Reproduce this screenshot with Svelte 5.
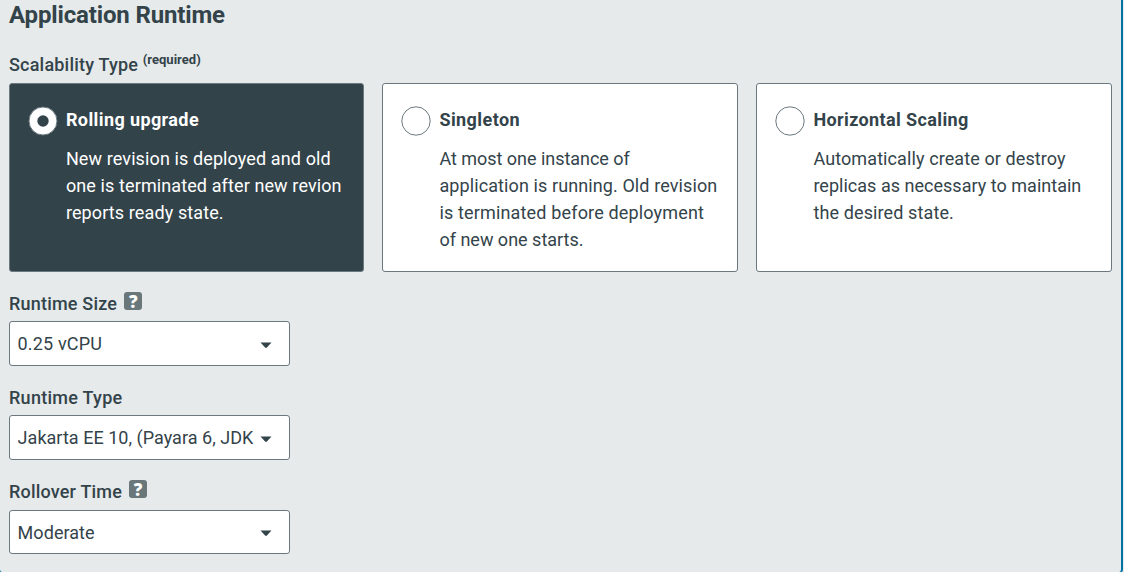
<script>
  const cards = [
    { title: 'Rolling upgrade', gap: 0.4, lines: [['New revision is deployed and old', 0.11], ['one is terminated after new revion', 0.11], ['reports ready state.', 0.11]] },
    { title: 'Singleton', gap: 0.42, lines: [['At most one instance of', -0.03], ['application is running. Old revision', 0.1], ['is terminated before deployment', 0.16], ['of new one starts.', 0]] },
    { title: 'Horizontal Scaling', gap: 0.38, lines: [['Automatically create or destroy', 0.1], ['replicas as necessary to maintain', 0.02], ['the desired state.', 0.12]] }
  ];
  const fields = [
    { label: 'Runtime Size', gap: 0.2, help: true, value: '0.25 vCPU', vgap: 0.15 },
    { label: 'Runtime Type', gap: 0.27, help: false, value: 'Jakarta EE 10, (Payara 6, JDK', vgap: 0.03 },
    { label: 'Rollover Time', gap: 0.19, help: true, value: 'Moderate', vgap: 0.05 }
  ];
  let selected = $state(0);
</script>

<main class="panel">
  <h2>Application Runtime</h2>
  <div class="group-label"><span>Scalability Type</span><small>(required)</small></div>

  <div class="cards">
    {#each cards as card, i}
      <button class="card" class:selected={selected === i} onclick={() => (selected = i)}>
        <svg class="radio" width="30" height="30" viewBox="0 0 30 30">
          {#if selected === i}
            <circle cx="15" cy="15" r="14" fill="#fff" stroke="#6b797f" stroke-width="1" />
            <circle cx="15" cy="15" r="5.7" fill="#33434a" />
          {:else}
            <circle cx="15" cy="15" r="14.2" fill="#fff" stroke="#6b797f" stroke-width="1" />
          {/if}
        </svg>
        <span class="body">
          <strong style="letter-spacing: {card.gap}px">{card.title}</strong>
          {#each card.lines as [line, gap]}
            <span class="line" style="letter-spacing: {gap}px">{line}</span>
          {/each}
        </span>
      </button>
    {/each}
  </div>

  {#each fields as field}
    <section class="field">
      <div class="label">
        <span style="letter-spacing: {field.gap}px">{field.label}</span>
        {#if field.help}<i class="help">?</i>{/if}
      </div>
      <div class="select">
        <span class="value" style="letter-spacing: {field.vgap}px">{field.value}</span>
        <svg width="12" height="7" viewBox="0 0 12 7"><path d="M.5 .5h11L6.9 5.6q-.9.9-1.8 0z" fill="#33434a" /></svg>
      </div>
    </section>
  {/each}
</main>

<style>
  :global(body) { background: #e7ebeb; overflow: hidden; }
  .panel {
    box-sizing: border-box;
    width: 1125px;
    height: 573px;
    margin-left: -2px;
    padding: 0 9px;
    border: solid #0072a3;
    border-width: 0 2px 1px 2px;
    border-radius: 0 0 4px 4px;
    background: #e6eaeb;
    color: #33434a;
    font: 18px/27px Roboto, sans-serif;
  }
  h2 { margin: 0; padding-top: 1px; font-size: 24px; line-height: 28px; font-weight: 700; letter-spacing: -0.15px; }
  .group-label { display: flex; align-items: flex-start; height: 32px; padding-top: 22px; font-weight: 500; letter-spacing: .2px; }
  small { margin: -5px 0 0 4.5px; font-size: 13px; font-weight: 700; letter-spacing: .04px; }
  .cards { display: grid; grid-template-columns: 355px 356px 356px; gap: 18px; }
  .card {
    box-sizing: border-box;
    display: flex;
    align-items: flex-start;
    min-width: 0;
    height: 189px;
    padding: 21px 0 0 19px;
    border: 1px solid #6b797f;
    border-radius: 3px;
    background: #fff;
    color: #33434a;
    font: 18px/27px Roboto, sans-serif;
    text-align: left;
  }
  .card.selected { padding-left: 18.5px; background: #33434a; color: #fff; }
  .radio { flex: none; margin: .5px 8px 0 -.6px; }
  .body { margin-top: 1px; }
  .body, .line, strong { display: block; white-space: nowrap; }
  strong { margin-bottom: 12px; font-weight: 700; }
  .field { height: 94.3px; }
  .field:last-child .label { height: 31.3px; padding-top: 17px; margin-bottom: .7px; }
  .field:last-child .select { height: 44px; padding-top: 1px; }
  .label { display: flex; align-items: flex-start; height: 31px; padding-top: 18px; font-weight: 500; }
  .help {
    width: 18px;
    height: 18px;
    margin: 2px 0 0 7px;
    border-radius: 3px;
    background: #69777b;
    color: #fff;
    font: 800 17px/19px "Open Sans", sans-serif;
    text-align: center;
  }
  .select {
    box-sizing: border-box;
    display: flex;
    align-items: center;
    width: 281px;
    height: 45px;
    padding: 0 17px 0 7.6px;
    border: 1px solid #6b797f;
    border-radius: 3px;
    background: #fff;
  }
  .value { flex: none; width: 236.4px; overflow: hidden; white-space: nowrap; }
  .select svg { flex: none; margin: 3px 0 0 6.5px; }
</style>
